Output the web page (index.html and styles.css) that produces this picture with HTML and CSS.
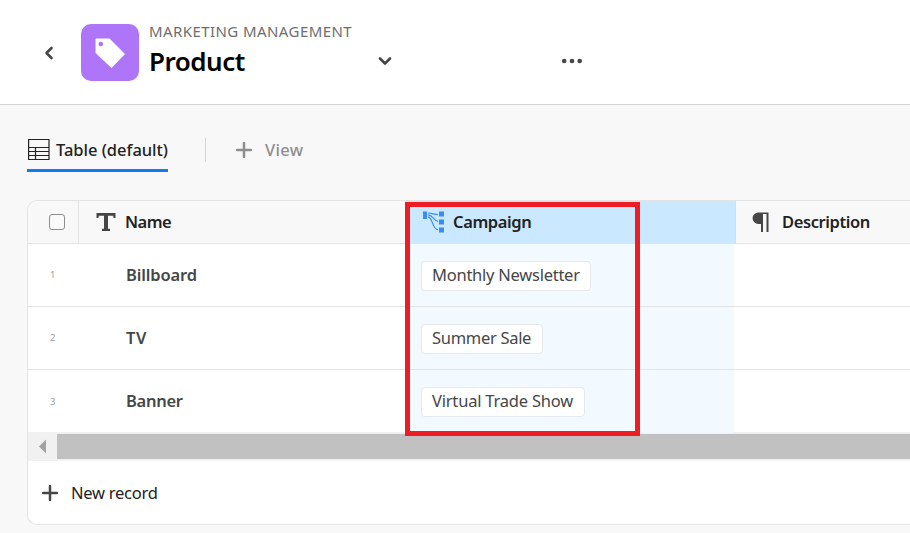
FILE: index.html
```html
<!DOCTYPE html>
<html lang="en">
<head>
<meta charset="utf-8">
<title>Product</title>
<link rel="stylesheet" href="styles.css">
</head>
<body>
<header class="top">
  <svg class="back" width="12" height="16" viewBox="0 0 12 16"><path d="M8.500 3 3.500 8l5 5" /></svg>
  <div class="badge"><svg width="30" height="30" viewBox="0 0 30 30"><path fill="#fff" fill-rule="evenodd" d="M1.500 0.500H14.500L30 16 16.500 30 .5 15V1.500Q.5 .5 1.500 .5ZM5.800 3.700a2.300 2.300 0 1 0 0 4.600 2.300 2.300 0 0 0 0-4.600Z"/></svg></div>
  <div class="titles">
    <div class="crumb"><span>MARKETING MANAGEMENT</span></div>
    <div class="title-row">
      <h1>Product</h1>
      <svg class="chev" width="16" height="12" viewBox="0 0 16 12"><path d="m3 3.500 5 5 5-5"/></svg>
      <svg class="dots" width="22" height="6" viewBox="0 0 22 6"><circle cx="3.200" cy="3" r="2.300"/><circle cx="11" cy="3" r="2.300"/><circle cx="18.700" cy="3" r="2.300"/></svg>
    </div>
  </div>
</header>
<main>
  <nav class="tabs">
    <div class="tab">
      <svg width="22" height="22" viewBox="0 0 22 22"><path fill="none" stroke="#222" stroke-width="1.200" d="M.6 1.500h20.400v20H.6zM.6 9.500H21M.6 13.500H21M.6 17.500H21M7.500 9.500v12"/></svg>
      <span class="t-table">Table (default)</span>
    </div>
    <div class="sep"></div>
    <div class="add-view">
      <svg width="16" height="16" viewBox="0 0 16 16"><path d="M8 1v14M1 8h14"/></svg>
      <span class="t-view">View</span>
    </div>
  </nav>
  <section class="card">
    <div class="row head">
      <div class="c-num"><span class="check"></span></div>
      <div class="c-name">
        <svg width="20" height="20" viewBox="0 0 20 20"><path fill="#464646" d="M.5 1h19v5h-1.800L17 3.800h-5v13h2V19H6v-2.200h2v-13H3L2.300 6H.5z"/></svg>
        <span class="t-name">Name</span>
      </div>
      <div class="c-camp">
        <svg width="22" height="22" viewBox="0 0 22 22"><g fill="#378ef0"><path d="M0 .5h4v7.500H0zM16 .5h5v5h-5zM16 8.500h5v5h-5zM16 16.500h5v5h-5z"/></g><path fill="none" stroke="#378ef0" stroke-width="1.200" d="M5 2c4 0 6 1.600 10 1.600M5 3.800c5 0 5 6 10 6.500M5 5.800c5 .5 4 12.500 10 13"/></svg>
        <span class="t-camp">Campaign</span>
      </div>
      <div class="c-desc">
        <svg width="17" height="20" viewBox="0 0 17 20"><path fill="#464646" d="M6.300.5H16.500V20h-2V2h-3.500v18H9V12H6.300a5.700 5.700 0 0 1 0-11.500Z"/></svg>
        <span class="t-desc">Description</span>
      </div>
    </div>
    <div class="row"><div class="c-num">1</div><div class="c-name"><span class="t-bill">Billboard</span></div><div class="c-camp"><span class="chip monthly">Monthly Newsletter</span></div><div class="c-desc"></div></div>
    <div class="row"><div class="c-num">2</div><div class="c-name"><span class="t-tv">TV</span></div><div class="c-camp"><span class="chip summer">Summer Sale</span></div><div class="c-desc"></div></div>
    <div class="row last"><div class="c-num">3</div><div class="c-name"><span class="t-banner">Banner</span></div><div class="c-camp"><span class="chip virtual">Virtual Trade Show</span></div><div class="c-desc"></div></div>
    <div class="scroll"><svg width="29" height="29" viewBox="0 0 29 29"><path fill="#a3a3a3" d="M18 7.500v14L11 14.500z"/></svg><div class="thumb"></div></div>
    <div class="new">
      <svg width="16" height="16" viewBox="0 0 16 16"><path d="M8 1v14M1 8h14"/></svg>
      <span class="t-new">New record</span>
    </div>
    <div class="highlight"></div>
  </section>
</main>
</body>
</html>
```
FILE: styles.css
```css
* { box-sizing: border-box; }
body {
  margin: 0;
  height: 533px;
  overflow: hidden;
  background: #f8f8f8;
  color: #222;
  font: 500 16.5px/24px "Noto Sans", sans-serif;
}
svg { display: block; flex: none; }
span { white-space: nowrap; }
.top {
  display: flex;
  height: 105px;
  padding: 24px 0 0 43px;
  background: #fff;
  border-bottom: 1px solid #d5d5d5;
}
.back { margin-top: 21px; }
.back path, .chev path {
  fill: none;
  stroke: #464646;
  stroke-width: 2.6;
  stroke-linecap: round;
  stroke-linejoin: round;
}
.badge {
  width: 58px;
  height: 57px;
  margin-left: 26px;
  padding: 14px 0 0 14px;
  border-radius: 10px;
  background: #ae75f8;
}
.titles { margin-left: 10px; }
.crumb {
  height: 15px;
  font-size: 15px;
  line-height: 15px;
  font-weight: 400;
  letter-spacing: .42px;
  color: #6e6e6e;
}
.title-row { display: flex; align-items: center; height: 43px; }
h1 {
  width: 227px;
  margin: 0;
  font-size: 26px;
  font-weight: 600;
  letter-spacing: -.5px;
  color: #000;
}
.chev { margin-left: 1px; }
.dots { margin-left: 168px; fill: #464646; }
main { padding-left: 27px; }
.tabs { display: flex; height: 67px; margin-top: 28px; }
.tab {
  display: flex;
  align-items: center;
  gap: 6px;
  width: 141px;
  height: 39px;
  padding: 0 0 4px 1px;
  border-bottom: 3px solid #147af3;
}
.t-table { letter-spacing: -.02px; padding-top: 1px; }
.sep { width: 1px; height: 24px; margin: 5px 30px 0 37px; background: #d5d5d5; }
.add-view { display: flex; align-items: center; gap: 13px; height: 34px; color: #8e8e8e; }
.t-view { letter-spacing: .3px; }
.add-view path, .new path { stroke: currentColor; stroke-width: 2.5; stroke-linecap: round; }
.card {
  position: relative;
  height: 325px;
  border: 1px solid #e3e3e3;
  border-right: 0;
  border-radius: 10px 0 0 10px;
  background: #fff;
  overflow: hidden;
}
.row {
  display: grid;
  grid-template-columns: 51px 326px 329px 1fr;
  height: 63px;
  border-bottom: 1px solid #e3e3e3;
}
.row > div { display: flex; align-items: center; }
.head { grid-template-columns: 51px 326px 330px 1fr; height: 43px; background: #f8f8f8; }
.head .c-num { border-right: 1px solid #e3e3e3; padding-left: 21px; }
.check { width: 16px; height: 16px; border: 1px solid #8e8e8e; border-radius: 3px; background: #fafafa; }
.c-num { padding-left: 22px; font-size: 9.5px; font-weight: 400; color: #a0a0a0; }
.c-name { padding: 0 0 1px 47px; color: #464646; font-weight: 600; }
.last .c-name { padding-bottom: 2px; }
.head .c-name { padding: 0 0 0 17px; gap: 9px; color: #222; }
.t-name { letter-spacing: -.5px; }
.t-camp, .t-desc { letter-spacing: -.4px; }
.t-bill { letter-spacing: -.15px; }
.t-tv { letter-spacing: .5px; }
.t-banner { letter-spacing: -.3px; }
.c-camp { padding-left: 16px; background: #f2f9ff; }
.head .c-camp { padding-left: 18px; gap: 8px; background: #cae8ff; font-weight: 600; }
.head .c-desc { padding-left: 16px; gap: 13px; border-left: 1px solid #dcdcdc; font-weight: 600; }
.last { border-bottom: 0; }
.chip {
  height: 30px;
  margin-top: 1px;
  padding: 1px 0 0 10px;
  border: 1px solid #e6e9eb;
  border-radius: 4px;
  background: #fff;
  color: #464646;
  font-weight: 400;
}
.last .chip { margin-top: 0; }
.monthly { width: 170px; letter-spacing: -.25px; }
.summer { width: 122px; letter-spacing: -.3px; }
.virtual { width: 164px; letter-spacing: -.2px; }
.scroll { display: flex; align-items: center; height: 29px; margin-top: -1px; background: #f1f1f1; }
.thumb { flex: 1; height: 25px; background: #c1c1c1; }
.new { display: flex; align-items: center; gap: 13px; height: 63px; padding-left: 14px; color: #464646; font-weight: 400; }
.t-new { color: #222; letter-spacing: -.25px; }
.highlight {
  position: absolute;
  left: 377px;
  top: 1px;
  width: 235px;
  height: 234px;
  border: 5px solid #ee1c25;
}
```
